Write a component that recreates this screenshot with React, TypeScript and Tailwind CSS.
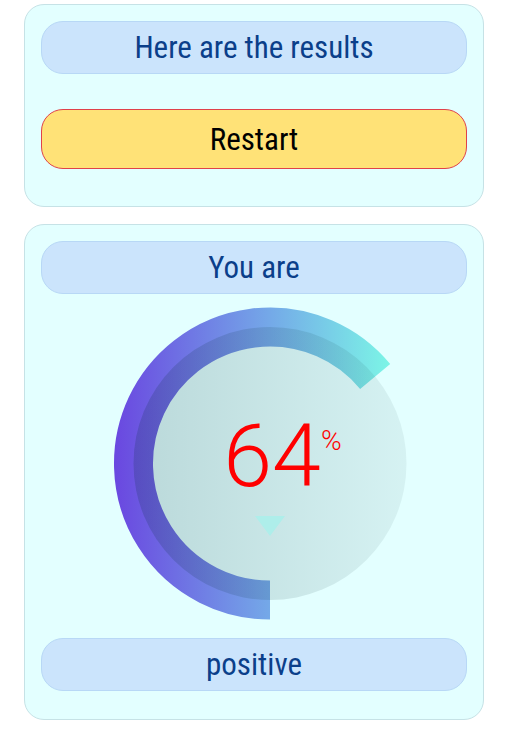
import React from 'react'

const Pill = ({ children }: { children: React.ReactNode }) => {
    return (
        <div className="h-[53px] flex items-center justify-center rounded-[22px] bg-[#cbe4fc] border border-[#b8d8f6] text-[31px] font-stretch-condensed text-[#0b3f8a] leading-none">
            {children}
        </div>
    )
}

const Gauge = ({ value }: { value: number }) => {
    const cx = 229
    const cy = 163.5
    const r = 136.5
    const angle = ((180 + value * 3.6) % 360) * Math.PI / 180
    const ex = cx + r * Math.sin(angle)
    const ey = cy - r * Math.cos(angle)
    const large = value > 50 ? 1 : 0
    return (
        <svg width="427" height="330" viewBox="0 0 427 330" className="block">
            <defs>
                <linearGradient id="arcGrad" gradientUnits="userSpaceOnUse" x1={cx - 156} y1="0" x2={cx + 125} y2="0">
                    <stop offset="0%" stopColor="#6a47e0" />
                    <stop offset="55%" stopColor="#74a8e8" />
                    <stop offset="100%" stopColor="#7cf8e6" />
                </linearGradient>
                <linearGradient id="faceGrad" x1="0" y1="0" x2="1" y2="0">
                    <stop offset="0%" stopColor="#002a30" stopOpacity="0.18" />
                    <stop offset="100%" stopColor="#002a30" stopOpacity="0.06" />
                </linearGradient>
            </defs>
            <path
                d={`M ${cx} ${cy + r} A ${r} ${r} 0 ${large} 1 ${ex} ${ey}`}
                fill="none"
                stroke="url(#arcGrad)"
                strokeWidth="39"
            />
            <circle cx={cx} cy={cy} r={r} fill="url(#faceGrad)" />
            <text
                x={cx + 2}
                y={186}
                textAnchor="middle"
                fill="#ff0000"
                fontSize="88"
                fontWeight="300"
                fontFamily="Roboto, sans-serif"
            >
                {value}
            </text>
            <text x={280} y={150} fill="#ff0000" fontSize="28" fontWeight="300" fontFamily="Roboto, sans-serif">
                %
            </text>
            <polygon points={`${cx - 15},216 ${cx + 15},216 ${cx},236`} fill="#aeeeea" />
        </svg>
    )
}

const App = () => {
    return (
        <div className="w-[507px] min-h-[733px] bg-white pt-1 pl-6 font-['Roboto',sans-serif]">
            <div className="w-[460px] flex flex-col gap-[17px]">
                <div className="rounded-[20px] border border-[#c6e2e6] bg-[#e3ffff] px-4 pt-4 pb-[37px]">
                    <Pill>Here are the results</Pill>
                    <button className="mt-[35px] w-full h-[60px] flex items-center justify-center rounded-[22px] bg-[#ffe277] border border-[#e0414a] text-[31px] font-stretch-condensed text-black leading-none">
                        Restart
                    </button>
                </div>
                <div className="rounded-[20px] border border-[#c6e2e6] bg-[#e3ffff] px-4 pt-4 pb-[28px]">
                    <Pill>You are</Pill>
                    <div className="mt-[6px] mb-2">
                        <Gauge value={64} />
                    </div>
                    <Pill>positive</Pill>
                </div>
            </div>
        </div>
    )
}

export default App
